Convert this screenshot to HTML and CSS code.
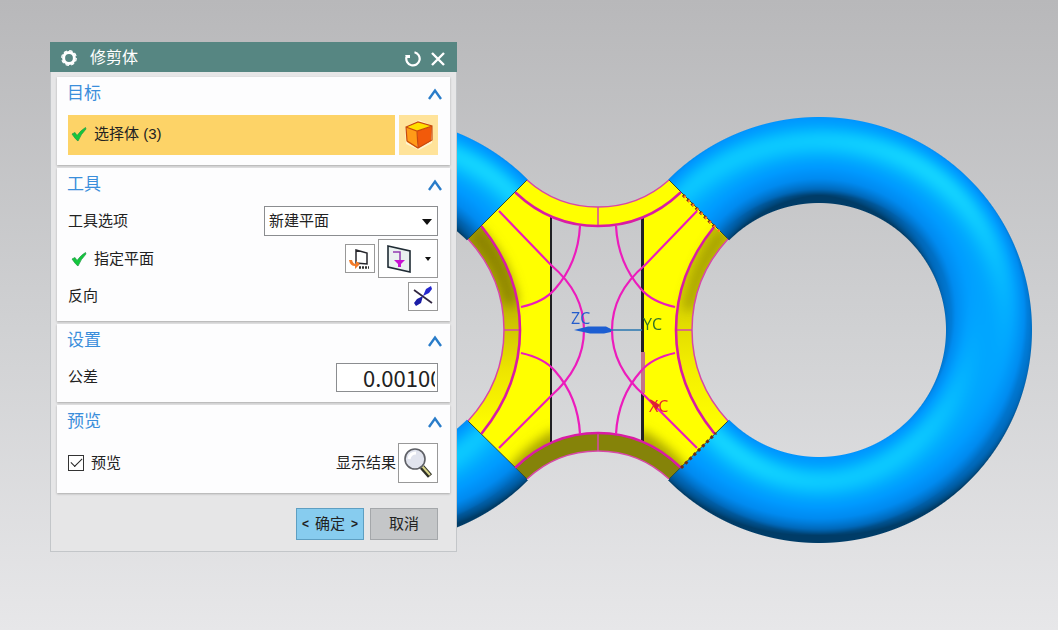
FILE: index.html
```html
<!DOCTYPE html>
<html lang="zh-CN">
<head>
<meta charset="utf-8">
<meta name="viewport" content="width=device-width, initial-scale=1">
<title>修剪体</title>
<link rel="stylesheet" href="styles.css">
</head>
<body>
<main class="viewport">
  <canvas class="rings" width="1058" height="630" aria-hidden="true"></canvas>
  <svg class="model" viewBox="0 0 1058 630" preserveAspectRatio="xMinYMin slice" role="img" aria-label="模型">
    <defs>
      <linearGradient id="band" x1="0" y1="228" x2="0" y2="432" gradientUnits="userSpaceOnUse">
        <stop offset="0" stop-color="#a49d00"/><stop offset=".4" stop-color="#c4bb00"/><stop offset=".7" stop-color="#eee500"/><stop offset="1" stop-color="#ff0"/>
      </linearGradient>
      <clipPath id="body">
        <path d="M527 180Q557 207 598 207V226Q574 225 551 217V442Q574 434 598 433V451Q557 451 527 479L468 421Q504 382 504 330Q504 278 468 239Z"/>
        <path d="M669 180Q639 207 598 207V226Q622 225 642 217V442Q622 434 598 433V451Q639 451 669 479L728 421Q692 382 692 330Q692 278 728 239Z"/>
      </clipPath>
      <filter id="soft" filterUnits="userSpaceOnUse" x="430" y="150" width="340" height="360"><feGaussianBlur stdDeviation="6"/></filter>
    </defs>
    <g clip-path="url(#body)">
      <path fill="#ff0" d="M460 170H740V490H460Z"/>
      <path fill="url(#band)" d="M468 239Q504 278 504 330Q504 382 468 421L482 433Q520 386 520 330Q520 274 482 227L460 230Z"/>
      <path fill="url(#band)" opacity=".6" d="M728 239Q692 278 692 330Q692 382 728 421L714 433Q676 386 676 330Q676 274 714 227Z"/>
      <g fill="none" stroke="#7d7600" filter="url(#soft)">
        <path stroke-width="15" opacity=".75" d="M474 233Q503 262 511 305"/>
        <path stroke-width="10" opacity=".6" d="M724 233Q698 262 688 310"/>
        <path stroke-width="16" opacity=".7" d="M510 480Q530 452 560 436"/>
        <path stroke-width="16" opacity=".7" d="M686 480Q666 452 636 436"/>
      </g>
      <path fill="#858309" d="M527 481Q557 451 598 451Q639 451 669 481L681 467Q645 433 598 433Q551 433 516 467Z"/>
    </g>
    <g fill="none" stroke="#202024">
      <path stroke-width="2" d="M551 217V442"/>
      <path stroke-width="3" d="M642.5 218V441"/>
      <path stroke="#304a35" d="M527 180L468 239M669 180L728 239M468 421L527 479M669 479L728 421"/>
    </g>
    <path stroke="#c47488" stroke-width="4" d="M643 352V393"/>
    <g fill="none" stroke="#d747a8" stroke-width="1.5">
      <path d="M527 180Q557 207 598 207Q639 207 669 180M468 239Q504 278 504 330Q504 382 468 421M728 239Q692 278 692 330Q692 382 728 421M527 479Q557 451 598 451Q639 451 669 479"/>
      <path d="M598 207V226M598 433V451M504 330H520M676 330H692"/>
    </g>
    <g fill="none" stroke="#d91ca4" stroke-width="2.6" stroke-linecap="round">
      <path d="M516 193Q551 226 598 226Q645 226 680 193M516 467Q551 433 598 433Q645 433 680 467"/>
      <path d="M482 227Q520 274 520 330Q520 386 482 433M714 227Q676 274 676 330Q676 386 714 433"/>
    </g>
    <g fill="none" stroke="#ec1cbc" stroke-width="2.2">
      <path d="M499 211L551 265Q584 293 584 330Q584 367 551 396L499 448"/>
      <path d="M697 211L645 265Q612 293 612 330Q612 367 645 396L697 448"/>
      <path d="M580 226Q578 263 555 289Q544 302 521 307M580 434Q578 397 555 371Q544 358 521 353"/>
      <path d="M616 226Q618 263 641 289Q652 302 675 307M616 434Q618 397 641 371Q652 358 675 353"/>
    </g>
    <path fill="none" stroke="#703018" stroke-width="3" stroke-dasharray="3 3" d="M683 195L716 228M681 468L716 433"/>
    <path fill="none" stroke="#ff7b20" stroke-width="2.500" stroke-dasharray="2 4" d="M684 196L722 234"/>
    <path stroke="#2876b0" stroke-width="1.5" d="M610 330H642"/>
    <path fill="#1c5ed2" d="M574 330L588 326.500H606L611 329V332L604 333.500H590Z"/>
    <path fill="#d81f38" d="M650 399L660 405L656 410Z"/>
    <g class="axis">
      <text x="571" y="324" fill="#245dcc">ZC</text>
      <text x="643" y="330" fill="#317127">YC</text>
      <text x="649" y="412" fill="#e8232e">XC</text>
    </g>
  </svg>

  <form class="dialog" aria-labelledby="dialog-title">
    <header class="titlebar">
      <svg class="gear" viewBox="0 0 18 18" aria-hidden="true"><circle cx="9" cy="9" r="7.300" fill="none" stroke="#fff" stroke-width="1.200" stroke-dasharray="3.500 2.230"/><circle cx="9" cy="9" r="5.400" fill="none" stroke="#fff" stroke-width="3"/></svg>
      <h1 class="title" id="dialog-title">修剪体</h1>
      <button class="bare" type="button" aria-label="重置"><svg width="18" height="18" viewBox="0 0 18 18"><path d="M2.500 8A6.700 6.700 0 1 0 10.500 3.200" fill="none" stroke="#fff" stroke-width="2.200"/><path d="M1.200 6H6V9H2Z" fill="#fff"/></svg></button>
      <button class="bare" type="button" aria-label="关闭"><svg width="18" height="18" viewBox="0 0 18 18"><path d="M3 4L15 16M15 4L3 16" fill="none" stroke="#fff" stroke-width="2.400"/></svg></button>
    </header>

    <div class="sections">
      <section class="section">
        <div class="head"><h2>目标</h2><button class="bare" type="button" aria-label="折叠目标"><svg width="16" height="14" viewBox="0 0 16 14"><path d="M3 12L9 3.500L15 12" fill="none" stroke="#297cc9" stroke-width="2.400"/></svg></button></div>
        <div class="row pick">
          <div class="picked"><svg class="tick" viewBox="0 0 16 16"><path d="M1 8L4 6.500L6 9.500Q10 4 14.500 1.500L15 3Q10 8 7 15Q5 14 1 8Z" fill="#12c83c" stroke="#239747" stroke-width=".7"/></svg><span>选择体 (3)</span></div>
          <button class="cube" type="button" aria-label="体"><svg width="30" height="30" viewBox="0 0 30 30"><path d="M1 7L15 0L29 6L28 23L15 30L2 24Z" fill="#fff4cc"/><path d="M2 7L13 11V28L3 22Z" fill="#ff9b18"/><path d="M13 11L28 6L27 21L14 28Z" fill="#f25a0a"/><path d="M2 7L14 2L28 6L13 11Z" fill="#ffe000"/><path d="M2 7L14 2L28 6V20L14 28L3 21ZM2 7L13 11L28 6M13 11L14 28" fill="none" stroke="#c84a0c" stroke-width="1.200"/></svg></button>
        </div>
      </section>

      <section class="section tools">
        <div class="head"><h2>工具</h2><button class="bare" type="button" aria-label="折叠工具"><svg width="16" height="14" viewBox="0 0 16 14"><path d="M3 12L9 3.500L15 12" fill="none" stroke="#297cc9" stroke-width="2.400"/></svg></button></div>
        <div class="row">
          <label class="label" for="tool-option">工具选项</label>
          <div class="combo"><select id="tool-option"><option>新建平面</option></select><svg class="caret" width="10" height="6" viewBox="0 0 10 6"><path d="M0 0H10L5 6Z" fill="#111"/></svg></div>
        </div>
        <div class="row plane">
          <div class="label ticked"><svg class="tick" viewBox="0 0 16 16"><path d="M1 8L4 6.500L6 9.500Q10 4 14.500 1.500L15 3Q10 8 7 15Q5 14 1 8Z" fill="#12c83c" stroke="#239747" stroke-width=".7"/></svg><span>指定平面</span></div>
          <button class="tool" type="button" aria-label="平面对话框"><svg width="24" height="24" viewBox="0 0 24 24"><path d="M8 3L19 6V17L8 16Z" fill="#fff" stroke="#26262c" stroke-width="1.500"/><path d="M1 13Q2 19 7 19V22L12 17L8 14V17Q5 17 4 13Z" fill="#f27b2a"/><path d="M11 20.500H21" stroke="#333" stroke-width="2.500" stroke-dasharray="2 1"/></svg></button>
          <button class="planepick" type="button" aria-label="指定平面类型"><svg width="26" height="30" viewBox="0 0 26 30"><path d="M2 2L24 7V28L2 23Z" fill="#eaf1f0" stroke="#1f2b34" stroke-width="1.600"/><path d="M7 8H14V16" fill="none" stroke="#923bb0" stroke-width="1.500"/><path d="M8 16H19L15 20V23H12V20Z" fill="#c712d2"/></svg><svg width="6" height="4" viewBox="0 0 6 4"><path d="M0 0H6L3 4Z" fill="#111"/></svg></button>
        </div>
        <div class="row">
          <span class="label">反向</span>
          <button class="tool" type="button" aria-label="反向"><svg width="22" height="22" viewBox="0 0 22 22"><path d="M2 5L20 18" stroke="#302540" stroke-width="1.700"/><path d="M11 11L14 4L19 1L20 4L17 8Z" fill="#2527cd"/><path d="M11 11L9 18L4 21L2 18L5 14Z" fill="#1b1da7"/></svg></button>
        </div>
      </section>

      <section class="section">
        <div class="head"><h2>设置</h2><button class="bare" type="button" aria-label="折叠设置"><svg width="16" height="14" viewBox="0 0 16 14"><path d="M3 12L9 3.500L15 12" fill="none" stroke="#297cc9" stroke-width="2.400"/></svg></button></div>
        <div class="row">
          <label class="label" for="tolerance">公差</label>
          <input class="number" id="tolerance" type="text" value="0.00100">
        </div>
      </section>

      <section class="section">
        <div class="head"><h2>预览</h2><button class="bare" type="button" aria-label="折叠预览"><svg width="16" height="14" viewBox="0 0 16 14"><path d="M3 12L9 3.500L15 12" fill="none" stroke="#297cc9" stroke-width="2.400"/></svg></button></div>
        <div class="row preview">
          <label class="label check"><input type="checkbox" checked>预览</label>
          <label for="show-result">显示结果</label>
          <button class="lens" id="show-result" type="button"><svg width="32" height="32" viewBox="0 0 32 32"><path d="M20 20L28 29" stroke="#2f3025" stroke-width="5.500"/><path d="M20 19L28 28" stroke="#d7d48a" stroke-width="2"/><circle cx="13" cy="12" r="10" fill="#e1e4ee" stroke="#5e6066" stroke-width="1.600"/><path d="M7 12Q8 6 14 6" fill="none" stroke="#fff" stroke-width="3"/></svg></button>
        </div>
      </section>
    </div>

    <footer class="actions">
      <button class="ok" type="button"><span class="angle">&lt;</span>确定<span class="angle">&gt;</span></button>
      <button class="cancel" type="button">取消</button>
    </footer>
  </form>
</main>
<script src="rings.js"></script>
</body>
</html>
```

FILE: styles.css
```css
* { box-sizing: border-box; }

body {
  margin: 0;
  font: 15px/20px "Liberation Sans", "Noto Sans CJK SC", sans-serif;
  color: #222;
}

button, input, select { font: inherit; color: inherit; }
h1, h2 { margin: 0; font-weight: 400; }
svg { display: block; flex: none; }

.viewport {
  position: relative;
  min-height: 100vh;
  padding: 42px 50px;
  overflow: hidden;
  background: linear-gradient(#b8b8ba, #cfd0d2 50%, #e7e7e9);
}

.rings, .model {
  position: absolute;
  inset: 0;
  width: 100%;
  height: 100%;
  object-fit: cover;
  object-position: left top;
}

.axis { font: 16px "Open Sans", sans-serif; }

.dialog {
  position: relative;
  width: 407px;
  max-width: 100%;
  background: #e6e6e7;
  box-shadow: inset 0 0 0 1px #c3c6c9;
}

.titlebar {
  display: flex;
  align-items: center;
  gap: 7px;
  height: 30px;
  padding: 2px 10px 0;
  background: #568682;
  color: #fff;
}
.gear { width: 18px; height: 18px; }
.title { flex: 1; padding-left: 5px; font-size: 16px; line-height: 20px; }

.bare { display: grid; place-items: center; padding: 0; border: 0; background: none; }

.sections { display: flex; flex-direction: column; gap: 3px; padding: 5px 7px 0; }

.section {
  padding: 4px 12px 10px 10px;
  background: #fdfdfe;
  box-shadow: 0 1px 2px #aaa;
}

.head {
  display: flex;
  align-items: center;
  justify-content: space-between;
  height: 26px;
  margin: 0 -4px 8px 0;
}
.head h2 { font-size: 17px; line-height: 26px; color: #3a8edb; }

.row { display: flex; align-items: center; min-height: 30px; padding-left: 1px; }
.tools .row + .row { margin-top: 3px; }
.label { flex: 1; }

.tick { width: 16px; height: 16px; }

.pick { gap: 4px; align-items: stretch; min-height: 40px; }
.picked {
  display: flex;
  flex: 1;
  align-items: center;
  gap: 7px;
  padding: 0 0 2px 3px;
  background: #fdd367;
}
.cube {
  display: grid;
  place-items: center;
  width: 39px;
  padding: 0;
  border: 0;
  background: #ffe39a;
}

.combo { position: relative; width: 174px; }
.combo select {
  width: 100%;
  height: 30px;
  padding: 0 24px 0 4px;
  appearance: none;
  border: 1px solid #8b8d90;
  border-radius: 0;
  background: #fff;
}
.caret { position: absolute; top: 13px; right: 6px; pointer-events: none; }

.ticked { display: flex; align-items: center; gap: 7px; padding-left: 3px; }
.plane { min-height: 39px; gap: 3px; }
.tool {
  display: grid;
  place-items: center;
  width: 30px;
  height: 29px;
  padding: 0;
  border: 1px solid #999;
  background: #fff;
}
.planepick {
  display: flex;
  align-items: center;
  justify-content: space-between;
  width: 60px;
  height: 39px;
  padding: 0 6px 0 7px;
  border: 1px solid #999;
  background: #fff;
}

.number {
  width: 102px;
  height: 29px;
  padding: 0 2px 0 26px;
  border: 1px solid #8b8d90;
  background: #fff;
  font: 22px/27px "Noto Sans CJK SC", sans-serif;
}

.preview { min-height: 40px; gap: 2px; }
.check { display: flex; align-items: center; gap: 7px; }
.check input {
  display: grid;
  place-items: center;
  width: 16px;
  height: 16px;
  margin: 0;
  appearance: none;
  border: 1px solid #333;
  background: #fff;
}
.check input:checked::after {
  content: "";
  width: 10px;
  height: 5px;
  margin-bottom: 4px;
  border: solid #222;
  border-width: 0 0 1px 1px;
  transform: rotate(-45deg);
}
.lens {
  display: grid;
  place-items: center;
  width: 40px;
  height: 40px;
  padding: 0;
  border: 1px solid #999;
  background: #fff;
}

.actions { display: flex; justify-content: flex-end; gap: 6px; padding: 15px 19px 12px; }
.actions button {
  display: flex;
  align-items: center;
  justify-content: center;
  gap: 6px;
  width: 68px;
  height: 32px;
  padding: 0;
  border: 1px solid #a4a7aa;
  background: #c4c6c8;
}
.actions .ok { border-color: #5e9fc2; background: #87ccef; }
.angle { font-size: 12px; font-weight: 700; }
```

FILE: rings.js
```js
// Shades the two torus bodies pixel by pixel under a pair of lights.
const canvas = document.querySelector('.rings');
const ctx = canvas.getContext('2d');
const image = ctx.createImageData(canvas.width, canvas.height);
const CY = 329.5, OUTER = 213, INNER = 127;
const MID = (OUTER + INNER) / 2, TUBE = (OUTER - INNER) / 2;
const RAMP = [[0, 60, 103], [0.2, 104, 185], [0.45, 138, 240], [0.65, 150, 255], [1.1, 165, 255]];

function ramp(t) {
  for (let i = 1; i < RAMP.length; i++) {
    const [t1, g1, b1] = RAMP[i], [t0, g0, b0] = RAMP[i - 1];
    if (t <= t1) {
      const k = (t - t0) / (t1 - t0);
      return [g0 + (g1 - g0) * k, b0 + (b1 - b0) * k];
    }
  }
  return [165, 255];
}

function drawRing(cx, side) {
  for (let y = Math.floor(CY - OUTER - 1); y <= CY + OUTER + 1; y++) {
    for (let x = Math.max(0, Math.floor(cx - OUTER - 1)); x < Math.min(canvas.width, cx + OUTER + 2); x++) {
      const dx = x - cx, dy = y - CY, rho = Math.hypot(dx, dy);
      const cover = Math.min(OUTER + 0.5 - rho, rho - INNER + 0.5, 1);
      if (cover <= 0 || (dx * side < 0 && Math.abs(dy) < Math.abs(dx))) continue;
      const s = Math.max(-1, Math.min(1, (rho - MID) / TUBE));
      const nx = dx / rho * s, ny = dy / rho * s, nz = Math.sqrt(1 - s * s);
      const diffuse = (Math.max(0, -0.4 * nx - 0.52 * ny + 0.75 * nz)
        + Math.max(0, 0.4 * nx - 0.52 * ny + 0.75 * nz)) / 2;
      const left = Math.max(0, -0.34 * nx - 0.4 * ny + 0.85 * nz);
      const right = Math.max(0, 0.34 * nx - 0.4 * ny + 0.85 * nz);
      const spec = Math.min(1, 0.6 * left ** 12 + 0.8 * right ** 12);
      const [g, b] = ramp(diffuse);
      const i = (y * canvas.width + x) * 4;
      image.data[i] = 28 * spec * spec;
      image.data[i + 1] = Math.min(228, g + 65 * spec);
      image.data[i + 2] = b;
      image.data[i + 3] = 255 * cover;
    }
  }
}

drawRing(376.5, -1);
drawRing(818.5, 1);
ctx.putImageData(image, 0, 0);
```
